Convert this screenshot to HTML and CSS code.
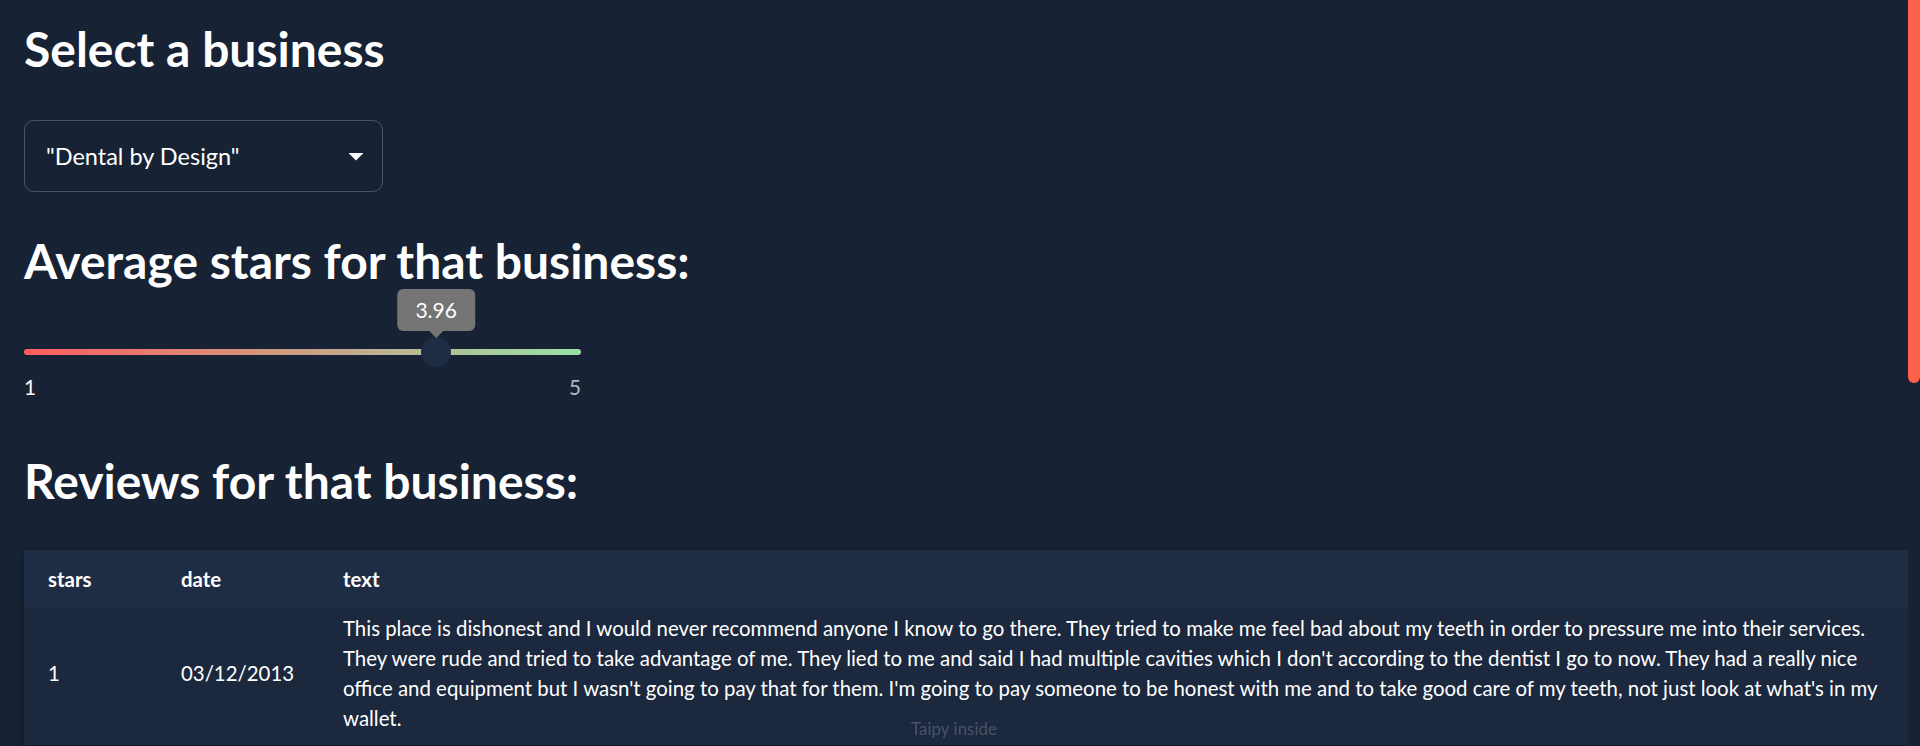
FILE: index.html
```html
<!DOCTYPE html>
<html lang="en">
<head>
<meta charset="utf-8">
<title>Reviews</title>
<link rel="stylesheet" href="styles.css">
</head>
<body>
<div class="page">
  <h1 class="title">Select a business</h1>
  <div class="select">
    <span class="select-value">"Dental by Design"</span>
    <svg class="select-arrow" viewBox="0 0 24 24"><path d="M7 10l5 5 5-5z"/></svg>
  </div>
  <h2 class="title title-stars">Average stars for that business:</h2>
  <div class="slider">
    <div class="slider-rail">
      <div class="slider-thumb" style="left:74%">
        <div class="slider-label">3.96</div>
      </div>
    </div>
    <div class="slider-marks">
      <span class="mark mark-active">1</span>
      <span class="mark">5</span>
    </div>
  </div>
  <h2 class="title title-reviews">Reviews for that business:</h2>
  <div class="table-wrap">
    <table class="reviews">
      <colgroup>
        <col class="col-stars">
        <col class="col-date">
        <col>
      </colgroup>
      <thead>
        <tr><th>stars</th><th>date</th><th>text</th></tr>
      </thead>
      <tbody>
        <tr>
          <td>1</td>
          <td>03/12/2013</td>
          <td class="cell-text">This place is dishonest and I would never recommend anyone I know to go there. They tried to make me feel bad about my teeth in order to pressure me into their services.<br>They were rude and tried to take advantage of me. They lied to me and said I had multiple cavities which I don't according to the dentist I go to now. They had a really nice<br>office and equipment but I wasn't going to pay that for them. I'm going to pay someone to be honest with me and to take good care of my teeth, not just look at what's in my<br>wallet.</td>
        </tr>
      </tbody>
    </table>
  </div>
</div>
<div class="scrollbar"><div class="scrollbar-thumb"></div></div>
<div class="footer">Taipy inside</div>
</body>
</html>
```
FILE: styles.css
```css
body {
  margin: 0;
  background: #172235;
  color: #ffffff;
  font-family: Lato, "Noto Sans", sans-serif;
}

.page {
  box-sizing: border-box;
  min-height: 1453px;
  padding: 20px 12px 0 24px;
}

.title {
  margin: 0;
  font-size: 48px;
  line-height: 1.2;
  font-weight: 700;
}

.select {
  box-sizing: border-box;
  width: 359px;
  height: 72px;
  margin-top: 42px;
  padding: 0 8px 0 21px;
  border: 1px solid rgba(255, 255, 255, 0.23);
  border-radius: 10px;
  display: flex;
  align-items: center;
  justify-content: space-between;
  font-size: 23.5px;
}

.select-arrow {
  width: 36px;
  height: 36px;
  fill: #ffffff;
}

.title-stars {
  margin-top: 40px;
}

.slider {
  width: 557px;
  padding-top: 60px;
}

.slider-rail {
  position: relative;
  height: 6px;
  border-radius: 3px;
  background: linear-gradient(90deg, #ff5c5e, #98e2aa);
}

.slider-thumb {
  position: absolute;
  top: 50%;
  width: 30px;
  height: 30px;
  border-radius: 50%;
  background: #1e2c44;
  transform: translate(-50%, -50%);
}

.slider-label {
  position: absolute;
  left: 50%;
  bottom: calc(100% + 6px);
  transform: translateX(-50%);
  padding: 6px 18px;
  border-radius: 6px;
  background: #757575;
  color: #ffffff;
  font-size: 21px;
  line-height: 30px;
  white-space: nowrap;
}

.slider-label::after {
  content: "";
  position: absolute;
  left: 50%;
  top: 100%;
  transform: translateX(-50%);
  border-left: 7px solid transparent;
  border-right: 7px solid transparent;
  border-top: 7px solid #757575;
}

.slider-marks {
  display: flex;
  justify-content: space-between;
  margin-top: 17px;
  font-size: 20.6px;
  line-height: 30px;
}

.mark {
  color: rgba(255, 255, 255, 0.7);
}

.mark-active {
  color: #ffffff;
}

.title-reviews {
  margin-top: 50px;
}

.table-wrap {
  margin-top: 40px;
  background: #1b283e;
  box-shadow: 0 2px 6px rgba(0, 0, 0, 0.25);
}

.reviews {
  width: 100%;
  border-collapse: collapse;
  table-layout: fixed;
  font-size: 20.4px;
  line-height: 30px;
}

.col-stars {
  width: 133px;
}

.col-date {
  width: 162px;
}

.reviews th {
  padding: 14px 24px 13px;
  background: #1f2d44;
  font-weight: 700;
  text-align: left;
}

.reviews td {
  padding: 6px 24px 12px;
  vertical-align: middle;
}

.reviews .cell-text {
  padding-right: 12px;
}

.scrollbar {
  position: fixed;
  top: 0;
  right: 0;
  bottom: 0;
  width: 12px;
  background: #172235;
}

.scrollbar-thumb {
  height: 383px;
  border-radius: 0 0 6px 6px;
  background: #ff6049;
}

.footer {
  position: fixed;
  left: 0;
  right: 12px;
  bottom: 7px;
  text-align: center;
  font-size: 17px;
  color: rgba(255, 255, 255, 0.2);
}
```
